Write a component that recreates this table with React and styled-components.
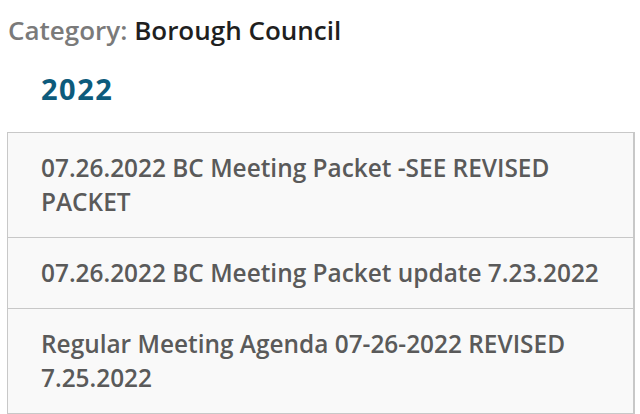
import React from "react";
import styled, { createGlobalStyle } from "styled-components";

const Global = createGlobalStyle`
  html, body { margin: 0; padding: 0; background: #fff; }
  body { font-family: "Open Sans", "Noto Sans", sans-serif; }
`;

const Page = styled.div`
  padding: 13px 5px 0 7px;
  width: 640px;
  box-sizing: border-box;
`;

const Title = styled.h1`
  margin: 0 0 0 1px;
  font-size: 26px;
  line-height: 34px;
  font-weight: 600;
  color: #1f1f1f;
`;

const Label = styled.span`
  color: #7a7a7a;
`;

const Year = styled.h2`
  margin: 24px 0 25px 34px;
  font-size: 29px;
  line-height: 36px;
  font-weight: 700;
  letter-spacing: 1.5px;
  color: #0d5b7c;
`;

const List = styled.ul`
  list-style: none;
  margin: 0;
  padding: 0;
  border: 1px solid #c8c8c8;
  border-bottom-width: 2px;
  border-right-width: 2px;
`;

const Item = styled.li`
  background: #f9f9f9;
  padding: 18px 20px 18px 33px;
  font-size: 24.4px;
  line-height: 34px;
  font-weight: 600;
  color: #5a5a5a;
  border-top: ${(p) => (p.$first ? "none" : "1px solid #c8c8c8")};
`;

const items = [
  "07.26.2022 BC Meeting Packet -SEE REVISED PACKET",
  "07.26.2022 BC Meeting Packet update 7.23.2022",
  "Regular Meeting Agenda 07-26-2022 REVISED 7.25.2022",
];

export default function App() {
  return (
    <>
      <Global />
      <Page>
        <Title>
          <Label>Category:</Label> Borough Council
        </Title>
        <Year>2022</Year>
        <List>
          {items.map((t, i) => (
            <Item key={i} $first={i === 0}>
              {t}
            </Item>
          ))}
        </List>
      </Page>
    </>
  );
}
